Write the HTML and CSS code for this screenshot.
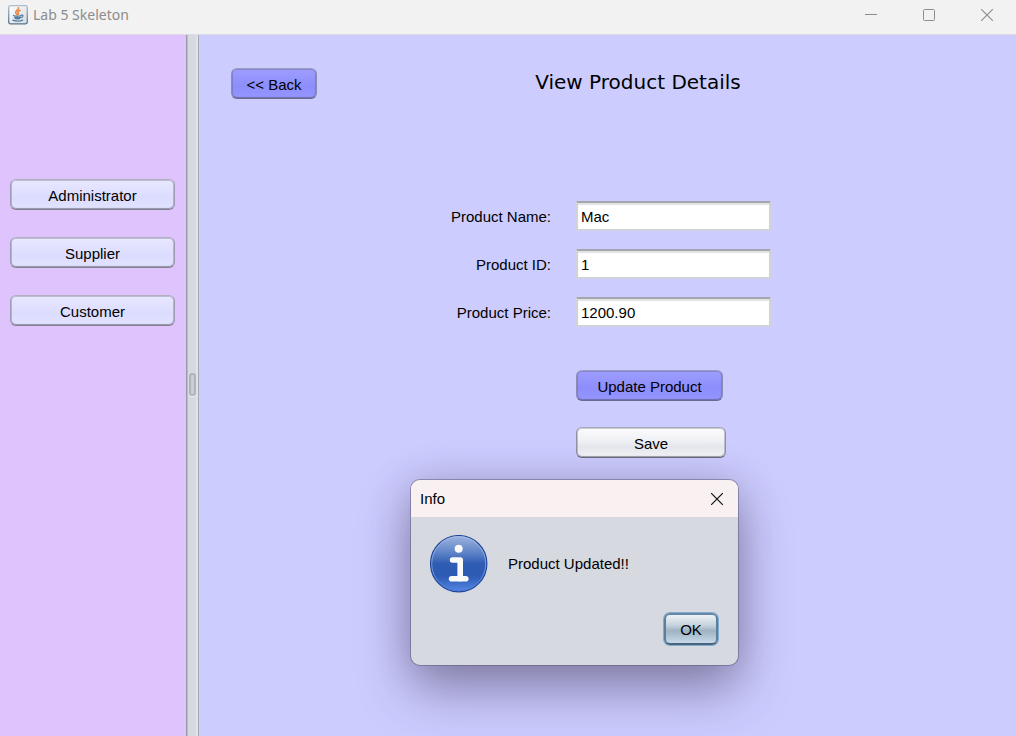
FILE: index.html
```html
<!DOCTYPE html>
<html lang="en">
<head>
<meta charset="utf-8">
<title>Lab 5 Skeleton</title>
<link rel="stylesheet" href="styles.css">
</head>
<body>
<div class="window">
  <header class="titlebar">
    <svg class="app-icon" viewBox="0 0 20 20" width="20" height="20" aria-hidden="true">
      <defs>
        <linearGradient id="tile" x1="0" y1="0" x2="1" y2="1">
          <stop offset="0" stop-color="#ffffff"/><stop offset="1" stop-color="#d3dbe2"/>
        </linearGradient>
        <linearGradient id="rim" x1="0" y1="0" x2="0" y2="1">
          <stop offset="0" stop-color="#b0bdc8"/><stop offset="1" stop-color="#577389"/>
        </linearGradient>
      </defs>
      <rect x="0.7" y="0.7" width="18.6" height="18.2" rx="1.8" fill="url(#tile)" stroke="url(#rim)" stroke-width="1.3"/>
      <path d="M10.4 2.8c.8 1.6-3 2.9-2.7 4.700.1.9 1 1.500 1.400 2.300M12 5.400c-2 .8-2.700 1.600-1.800 2.700.4.600.2 1.100-.4 1.700" fill="none" stroke="#e98d4c" stroke-width="1.700" stroke-linecap="round"/>
      <path d="M5.500 10.500c2 .8 5.800 .8 7.800 0M6.400 12.100c2 .7 4.300 .7 6.200 0M7.200 13.500c1.600 .6 3.200 .6 4.600 0M13.200 10.200c2.200 -.6 2.500 1.600 -.2 2.500M4.800 15.200c2.600 1.300 7.800 1.100 9.800 -.1" fill="none" stroke="#5580a3" stroke-width="1.300" stroke-linecap="round"/>
    </svg>
    <h1 class="window-title">Lab 5 Skeleton</h1>
    <div class="window-controls">
      <button class="window-control" type="button" aria-label="Minimize">
        <svg viewBox="0 0 12 12" width="12" height="12"><path d="M0 5.5H12" stroke="#8c8c8c"/></svg>
      </button>
      <button class="window-control" type="button" aria-label="Maximize">
        <svg viewBox="0 0 12 12" width="12" height="12"><rect x=".5" y=".5" width="11" height="11" rx="1" fill="none" stroke="#8c8c8c"/></svg>
      </button>
      <button class="window-control" type="button" aria-label="Close">
        <svg viewBox="0 0 12 12" width="12" height="12"><path d="M0 0L12 12M12 0L0 12" stroke="#8c8c8c" stroke-width="1.1"/></svg>
      </button>
    </div>
  </header>

  <div class="split">
    <nav class="sidebar" aria-label="Roles">
      <button class="button button-role" type="button">Administrator</button>
      <button class="button button-role" type="button">Supplier</button>
      <button class="button button-role" type="button">Customer</button>
    </nav>
    <div class="divider"><span class="divider-grip"></span></div>
    <main class="content">
      <div class="page-head">
        <button class="button button-accent button-back" type="button">&lt;&lt; Back</button>
        <h2 class="page-title">View Product Details</h2>
      </div>
      <form class="form">
        <label class="label" for="name">Product Name:</label>
        <input class="field" id="name" type="text" value="Mac">
        <label class="label" for="pid">Product ID:</label>
        <input class="field" id="pid" type="text" value="1">
        <label class="label" for="price">Product Price:</label>
        <input class="field" id="price" type="text" value="1200.90">
        <div class="actions">
          <button class="button button-accent button-update" type="button">Update Product</button>
          <button class="button button-save" type="button">Save</button>
        </div>
      </form>
    </main>
  </div>

  <section class="dialog" role="dialog" aria-labelledby="dialog-title">
    <header class="dialog-bar">
      <h2 class="dialog-title" id="dialog-title">Info</h2>
      <button class="dialog-close" type="button" aria-label="Close dialog">
        <svg viewBox="0 0 12 12" width="12" height="12"><path d="M0 0L12 12M12 0L0 12" stroke="#111" stroke-width="1.2"/></svg>
      </button>
    </header>
    <div class="dialog-body">
      <div class="dialog-message">
        <svg viewBox="0 0 58 58" width="58" height="58" aria-hidden="true">
          <defs>
            <linearGradient id="ball" x1="0" y1="0" x2="0" y2="1">
              <stop offset="0" stop-color="#9db4df"/><stop offset=".3" stop-color="#5f84c8"/>
              <stop offset=".5" stop-color="#2f5cb3"/><stop offset=".72" stop-color="#2c5ab4"/>
              <stop offset="1" stop-color="#5688e6"/>
            </linearGradient>
            <linearGradient id="glow" x1="0" y1="0" x2="0" y2="1">
              <stop offset="0" stop-color="#a9bde6"/><stop offset="1" stop-color="#4c7ad2"/>
            </linearGradient>
          </defs>
          <circle cx="28.7" cy="28.7" r="28.2" fill="url(#ball)" stroke="#20469a" stroke-width="1.1"/>
          <circle cx="28.7" cy="28.7" r="27" fill="none" stroke="url(#glow)" stroke-width="1"/>
          <circle cx="28.7" cy="13.8" r="4" fill="#fafafa"/>
          <path d="M22.600 25H30.200V43.600" fill="none" stroke="#fafafa" stroke-width="5.600" stroke-linecap="round" stroke-linejoin="round"/>
          <path d="M21.600 43.800H35.800" fill="none" stroke="#fafafa" stroke-width="5.600" stroke-linecap="round"/>
        </svg>
        <p class="dialog-text">Product Updated!!</p>
      </div>
      <button class="button button-ok" type="button">OK</button>
    </div>
  </section>
</div>
</body>
</html>
```
FILE: styles.css
```css
* {
  box-sizing: border-box;
}

body {
  margin: 0;
  font: 15px/20px "Liberation Sans", Arial, sans-serif;
  color: #000;
}

h1, h2, p {
  margin: 0;
  font-weight: 400;
}

svg {
  display: block;
}

.window {
  position: relative;
  display: flex;
  flex-direction: column;
  min-height: 100vh;
  overflow: hidden;
}

.titlebar {
  display: flex;
  align-items: center;
  height: 35px;
  padding: 0 0 4px 8px;
  background: #f2f2f2;
  border-bottom: 1px solid #dcdce2;
}

.window-title {
  margin-left: 5px;
  font: 14px/20px "Noto Sans", "Open Sans", sans-serif;
  color: #8c8c8c;
}

.window-controls {
  display: flex;
  margin-left: auto;
}

.window-control,
.dialog-close {
  display: flex;
  align-items: center;
  justify-content: center;
  padding: 0;
  border: 0;
  background: none;
}

.window-control {
  width: 58px;
  height: 28px;
}

.split {
  flex: 1;
  display: flex;
}

.sidebar {
  display: flex;
  flex-direction: column;
  gap: 27px;
  flex: 0 0 186px;
  padding: 144px 11px 0 10px;
  background: #dfc3fd;
}

.divider {
  display: flex;
  align-items: center;
  justify-content: center;
  flex: 0 0 13px;
  padding: 0 1px 2px 0;
  background: #d6d9e0;
  border-left: 1px solid #999ca5;
  border-right: 1px solid #a5a8b4;
  box-shadow: inset 1px 0 #b9bcc5, inset -2px 0 #e0e3e8;
}

.divider-grip {
  width: 7px;
  height: 23px;
  border: 2px solid #b0b3bc;
  border-radius: 3px;
  background: #c9cdd4;
  box-shadow: 0 1px #eceef2;
}

.content {
  flex: 1;
  background: #ccccff;
}

.page-head {
  display: flex;
  align-items: flex-start;
  padding: 33px 57px 0 32px;
}

.page-title {
  flex: 1;
  font: 20px/28px "DejaVu Sans", Verdana, sans-serif;
  text-align: center;
}

.button {
  height: 31px;
  padding: 2px 0 0;
  border: 1px solid;
  border-color: #a6a8b8 #9092a2 #686a7b;
  border-radius: 6px;
  font: inherit;
  color: #000;
  background: linear-gradient(#fcfcfd, #eff0f4 45%, #e4e7ed 65%, #f7f8fa);
  box-shadow: inset 0 0 0 1px rgba(80, 82, 100, 0.28), inset 0 -1px 1px rgba(60, 62, 80, 0.3);
}

.button-role {
  border-color: #b3aec2 #a09ab2 #85808f;
  background: linear-gradient(#e8e8ff, #dcdcff 60%, #e2e2ff);
}

.button-accent {
  border-color: #9a9cc0 #8b8db5 #686a90;
  background: linear-gradient(#9d9dff, #8d8dfc 60%, #9696ff);
}

.button-back {
  width: 86px;
}

.button-update {
  width: 147px;
}

.button-save {
  width: 150px;
}

.form {
  display: grid;
  grid-template-columns: 107px 195px;
  column-gap: 25px;
  row-gap: 18px;
  align-items: center;
  justify-content: center;
  margin-top: 102px;
}

.label {
  padding-top: 1px;
  text-align: right;
}

.field {
  width: 100%;
  height: 30px;
  padding: 1px 3px 0;
  border: 2px solid #d2d2da;
  border-top-color: #a5a5ac;
  border-radius: 0;
  box-shadow: inset 0 2px 1px #e2e2e4;
  background: #fff;
  font: inherit;
  color: #000;
}

.actions {
  grid-column: 2;
  display: flex;
  flex-direction: column;
  gap: 26px;
  margin-top: 25px;
}

.dialog {
  position: absolute;
  left: 411px;
  top: 480px;
  width: 327px;
  border-radius: 9px;
  background: #d6d9e0;
  box-shadow: 0 0 0 1px rgba(90, 85, 120, 0.5), 0 26px 52px rgba(50, 40, 70, 0.4), 0 2px 40px rgba(50, 40, 70, 0.22);
}

.dialog-bar {
  display: flex;
  align-items: center;
  justify-content: space-between;
  height: 37px;
  padding: 0 9px;
  border-radius: 9px 9px 0 0;
  background: #f9f0f1;
}

.dialog-title {
  font-size: 15px;
}

.dialog-close {
  width: 24px;
  height: 24px;
}

.dialog-body {
  display: flex;
  flex-direction: column;
  gap: 20px;
  padding: 18px 20px 20px 19px;
}

.dialog-message {
  display: flex;
  align-items: center;
  gap: 20px;
}

.button-ok {
  align-self: flex-end;
  width: 54px;
  height: 32px;
  padding: 1px 0 0;
  border: 2px solid;
  border-color: #6487a6 #5b7e9d #47647f;
  background: linear-gradient(#eef2f6, #c2cfda 40%, #a1b3c2 55%, #a9bccb 68%, #c8dae9);
  box-shadow: 0 0 0 1px #82abd0;
}
```
